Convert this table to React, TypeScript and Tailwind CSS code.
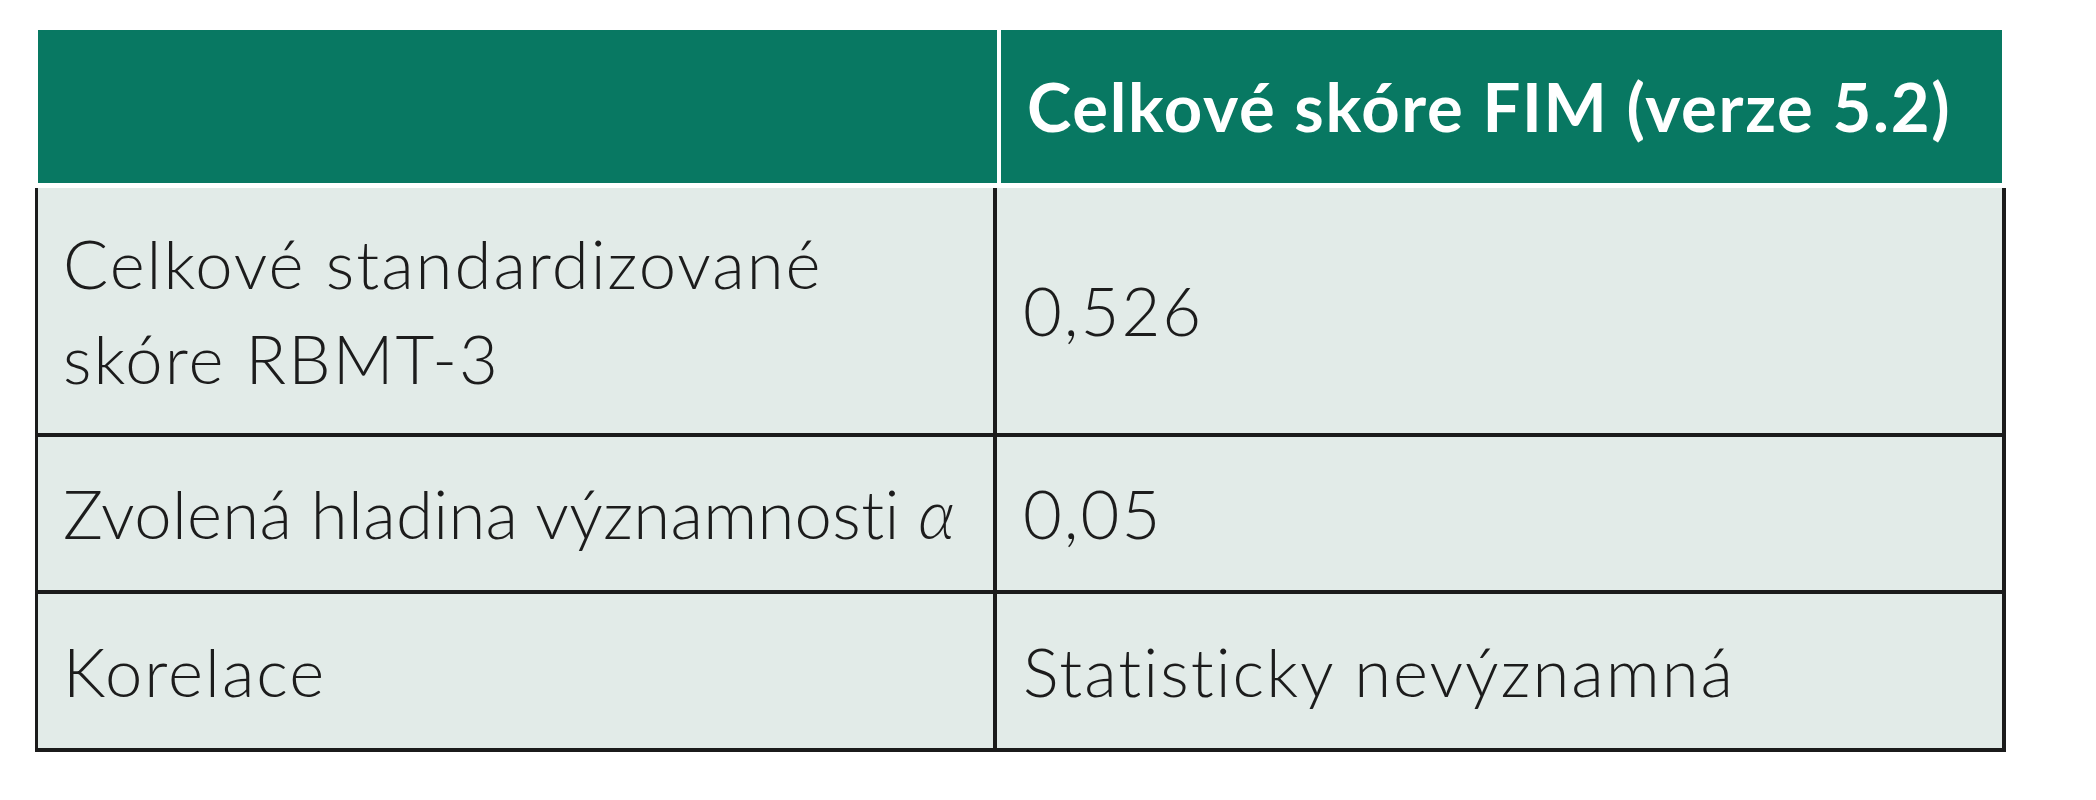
const rows = [
  { label: ["Celkové standardizované", "skóre RBMT-3"], value: "0,526", h: "h-[249px]", track: "" },
  { label: ["Zvolená hladina významnosti "], alpha: true, value: "0,05", h: "h-[157px]", track: "tracking-[0.005em]" },
  { label: ["Korelace"], value: "Statisticky nevýznamná", h: "h-[154px]", track: "" },
];

export default function App() {
  return (
    <div
      className="w-[2096px] h-[800px] bg-white pt-[30px] pl-[35px]"
      style={{ fontFamily: "Lato, 'Open Sans', sans-serif" }}
    >
      <div className="w-[1971px]">
        {/* header */}
        <div className="ml-[3px] mr-[4px] grid grid-cols-[959px_1fr] gap-x-[4px] h-[153px]">
          <div className="bg-[#087862]" />
          <div className="bg-[#087862] flex items-center pl-[26px] text-white font-bold text-[67px] leading-none tracking-[0.025em]">
            Celkové skóre FIM (verze 5.2)
          </div>
        </div>
        <div className="h-[5px]" />
        {/* body */}
        <div className="border-l-[3px] border-r-[4px] border-b-[4px] border-[#1b1b1b] bg-[#e2ebe8] text-[#1c1c1c] font-light text-[67px] tracking-[0.03em]">
          {rows.map((r, i) => (
            <div
              key={i}
              className={`grid grid-cols-[959px_1fr] ${r.h} ${i < rows.length - 1 ? "border-b-[4px] border-[#1b1b1b]" : ""}`}
            >
              <div className={`border-r-[4px] border-[#1b1b1b] flex flex-col justify-center pl-[25px] leading-[95px] whitespace-nowrap ${r.track}`}>
                {r.label.map((l, j) => (
                  <div key={j}>
                    {l}
                    {r.alpha && <span className="italic">α</span>}
                  </div>
                ))}
              </div>
              <div className="flex items-center pl-[26px] leading-[95px]">{r.value}</div>
            </div>
          ))}
        </div>
      </div>
    </div>
  );
}
